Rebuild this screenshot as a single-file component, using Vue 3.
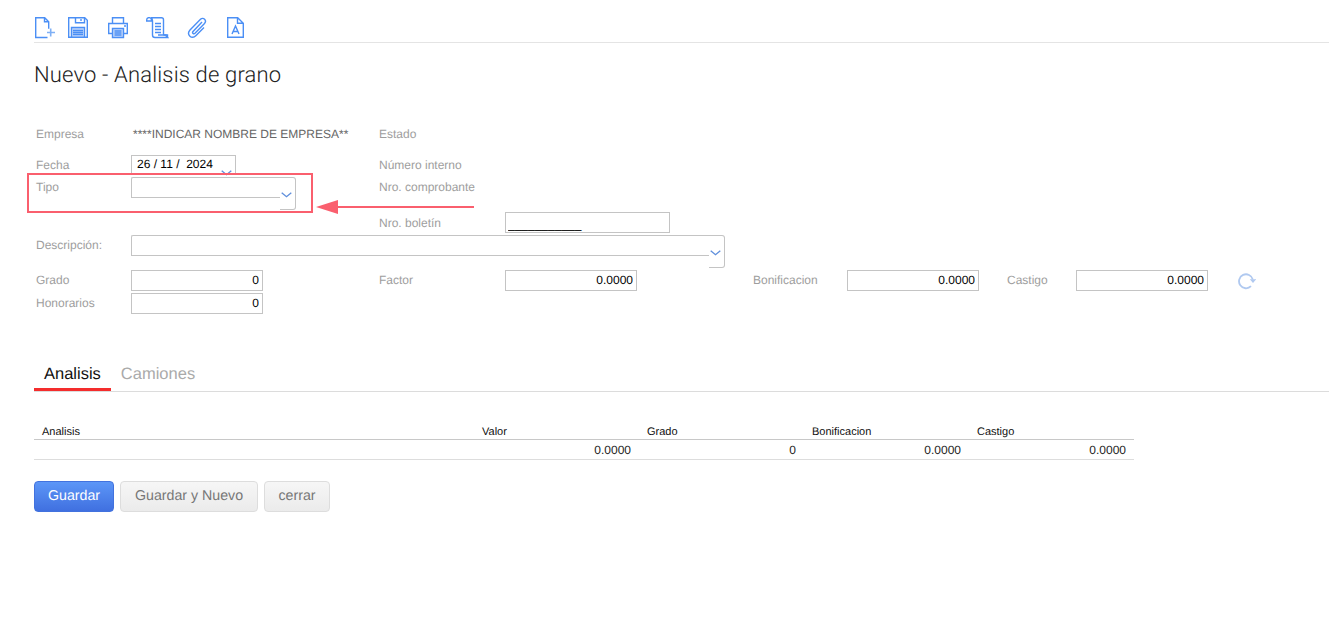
<script setup>
const tableHeaders = ['Analisis', 'Valor', 'Grado', 'Bonificacion', 'Castigo']
const tableValues = ['', '0.0000', '0', '0.0000', '0.0000']
</script>

<template>
  <div class="page">
    <div class="toolbar">
      <svg class="ic" style="margin-left:1px" width="20" height="22" viewBox="0 0 20 22"><path d="M12.500 20.500H.7V.7h9l4 4v7M9.500.7v4h4"/><path class="alt" d="M12 15.500h8M15.700 11.500v8"/></svg>
      <svg class="ic" style="margin-left:13px" width="20" height="22" viewBox="0 0 20 22"><path d="M.7.7h16l2.600 2.600v17H.7z"/><path d="M7.500.7v5h9v-5M13 2v2"/><path class="fill" d="M3.500 10.500h13v9.800h-13z"/><path d="M5 13.500h10M5 15.500h10M5 17.500h10"/></svg>
      <svg class="ic" style="margin-left:20px" width="20" height="22" viewBox="0 0 20 22"><path d="M4.500 6.500V.7h11v5.800"/><path d="M4 16.500H.7V6.500h18.600v10H16"/><path class="fill" d="M4.500 11.500h11v9h-11z"/><path d="M6.500 14h7M6.500 16h7M6.500 18h7M16 9h2"/></svg>
      <svg class="ic" style="margin-left:18px" width="23" height="22" viewBox="0 0 23 22"><path d="M5 .7h10.500a2 2 0 0 1 2 2V18M.7 3a2.300 2.300 0 0 1 4.800 0v1H.7zM5 .7c1 .8 1.500 1.500 1.500 3V18c0 1.500 1 2.500 2.500 2.500h12.500c-1-.7-1.500-1.500-1.500-2.500h-8"/><path d="M9 6.500h6M9 9.500h6M9 12.500h6M9 15.500h6M17.500 18h4v2.500"/></svg>
      <svg class="ic" style="margin-left:18px" width="20" height="22" viewBox="0 0 20 22"><path d="M15 5 6 14.500c-1.200 1.400.6 3 2 1.700L17.500 6.500c2.700-3-1.200-7-4-4.200L3 13c-4 4.500 1.800 10 5.800 5.800L17 10.500"/></svg>
      <svg class="ic" style="margin-left:20px" width="18" height="22" viewBox="0 0 18 22"><path d="M.7.7h10l5.600 5.600v14H.7zM10.500.7v5.600h5.800"/><path d="m5 17 3.500-8 3.500 8M6.200 14.500h4.600"/></svg>
    </div>

    <h1 class="title">Nuevo - Analisis de grano</h1>

    <div class="form">
      <div class="row r1">
        <label class="first">Empresa</label>
        <span class="static">****INDICAR NOMBRE DE EMPRESA**</span>
        <label>Estado</label>
      </div>
      <div class="row r2">
        <label class="first">Fecha</label>
        <div class="date">
          <span class="date-text">26 / 11 /&nbsp; 2024</span>
          <svg class="chev date-chev" width="11" height="6" viewBox="0 0 11 6"><path d="m.7.7 4.800 4 4.800-4"/></svg>
        </div>
        <label>Número interno</label>
      </div>
      <div class="row r3">
        <label class="first">Tipo</label>
        <div class="select tipo">
          <div class="sel-input"></div>
          <div class="sel-btn"><svg class="chev" width="11" height="6" viewBox="0 0 11 6"><path d="m.7.7 4.800 4 4.800-4"/></svg></div>
        </div>
        <label>Nro. comprobante</label>
      </div>
      <div class="row r4">
        <span></span><span></span>
        <label class="tall">Nro. boletín</label>
        <input class="inp boletin" value="___________" />
      </div>
      <div class="row r5">
        <label class="first">Descripción:</label>
        <div class="select desc">
          <div class="sel-input"></div>
          <div class="sel-btn"><svg class="chev" width="11" height="6" viewBox="0 0 11 6"><path d="m.7.7 4.800 4 4.800-4"/></svg></div>
        </div>
      </div>
      <div class="row r6">
        <label class="first">Grado</label>
        <input class="inp num" value="0" />
        <label>Factor</label>
        <input class="inp num" value="0.0000" />
        <label>Bonificacion</label>
        <input class="inp num" value="0.0000" />
        <label>Castigo</label>
        <input class="inp num" value="0.0000" />
        <svg class="refresh" width="18" height="18" viewBox="0 0 18 18"><path d="M13 14.200A7 7 0 1 1 14.800 7.500"/><path class="head" d="M11.800 7.300h6.400L15 11z"/></svg>
      </div>
      <div class="row r7">
        <label class="first">Honorarios</label>
        <input class="inp num" value="0" />
      </div>
    </div>

    <div class="tabs">
      <div class="tab active">Analisis</div>
      <div class="tab">Camiones</div>
    </div>

    <table class="grid">
      <thead>
        <tr><th v-for="h in tableHeaders" :key="h">{{ h }}</th></tr>
      </thead>
      <tbody>
        <tr><td v-for="(v, i) in tableValues" :key="i">{{ v }}</td></tr>
      </tbody>
    </table>

    <div class="buttons">
      <button class="btn primary">Guardar</button>
      <button class="btn">Guardar y Nuevo</button>
      <button class="btn close">cerrar</button>
    </div>

    <div class="mark-box"></div>
    <svg class="mark-arrow" width="160" height="16" viewBox="0 0 160 16"><path d="M20 7h138" stroke="#fa5f6e" stroke-width="2"/><path d="M0 7 22 0v14z" fill="#fa5f6e"/></svg>
  </div>
</template>

<style>
html, body { margin: 0; background: #fff; }
</style>

<style scoped>
.page {
  position: relative;
  width: 1329px;
  height: 617px;
  overflow: hidden;
  padding-left: 34px;
  box-sizing: border-box;
  font-family: "Liberation Sans", Arial, sans-serif;
  background: #fff;
  text-rendering: geometricPrecision;
}
.toolbar {
  display: flex;
  align-items: flex-start;
  height: 43px;
  padding-top: 17px;
  box-sizing: border-box;
  border-bottom: 1px solid #e4e4e4;
}
.ic { fill: none; stroke: #4b8ff5; stroke-width: 1.400; display: block; flex: none; }
.ic .alt { stroke: #7fb0f5; stroke-width: 1.600; }
.ic .fill { fill: #c4d9fb; }
.title {
  margin: 19px 0 0;
  font: 300 22px/28px Roboto, sans-serif;
  color: #222;
  height: 28px;
  letter-spacing: 0.16px;
}
.form { margin-top: 34px; }
.row {
  display: grid;
  grid-template-columns: 97px 248px 126px 248px 94px 160px 69px 162px 1fr;
  align-items: start;
}
.r1 { height: 31px; }
.r2 { height: 22px; }
.r3 { height: 35px; }
.r4 { height: 23px; }
.r5 { height: 35px; }
.r6 { height: 23px; }
.r7 { height: 21px; }
label {
  font-size: 12px;
  line-height: 20px;
  color: #9e9e9e;
  white-space: nowrap;
}
label.first { padding-left: 2px; }
label.tall { line-height: 22px; }
.static {
  font-size: 12px;
  line-height: 20px;
  color: #666;
  padding-left: 2px;
  white-space: nowrap;
}
.date {
  position: relative;
  width: 105px;
  height: 20px;
  box-sizing: border-box;
  border: 1px solid #c4c4c4;
  font-size: 12px;
  line-height: 17px;
  color: #000;
  padding-left: 5px;
}
.date-text { white-space: nowrap; }
.date-chev { position: absolute; right: 3px; top: 14px; }
.chev { fill: none; stroke: #5f8fdc; stroke-width: 1.300; display: block; }
.select { display: flex; align-items: flex-start; }
.select.tipo { width: 165px; }
.select.desc { width: 594px; grid-column: 2 / span 4; }
.sel-input {
  flex: 1;
  height: 21px;
  box-sizing: border-box;
  border: 1px solid #c4c4c4;
  border-right: 0;
  border-radius: 2px 0 0 0;
}
.sel-btn {
  position: relative;
  width: 16px;
  height: 33px;
  box-sizing: border-box;
  border: 1px solid #c4c4c4;
  border-left: 0;
  border-radius: 0 3px 3px 0;
}
.sel-btn .chev { position: absolute; right: 3px; top: 14px; }
.inp {
  display: block;
  width: 132px;
  height: 21px;
  box-sizing: border-box;
  border: 1px solid #c4c4c4;
  border-radius: 0;
  outline: 0;
  padding: 0 3px 1px 2px;
  font: 12px "Liberation Sans", Arial, sans-serif;
  text-rendering: geometricPrecision;
  color: #000;
  background: #fff;
}
.num { text-align: right; }
.boletin { width: 165px; padding: 2px 2px 0; text-rendering: auto; }
.refresh { margin: 2px 0 0 0; fill: none; stroke: #b0c9f0; stroke-width: 1.800; }
.refresh .head { fill: #b0c9f0; stroke: none; }
.tabs {
  display: flex;
  margin-top: 43px;
  height: 34px;
  border-bottom: 1px solid #dcdcdc;
}
.tab {
  height: 31px;
  padding: 0 10px;
  font-size: 16.5px;
  line-height: 34px;
  color: #aaa;
}
.tab.active {
  color: #111;
  border-bottom: 3px solid #f42d2d;
}
.grid {
  margin-top: 31px;
  width: 1100px;
  border-collapse: collapse;
  table-layout: fixed;
}
.grid th:first-child, .grid td:first-child { width: 440px; }
.grid th {
  font-size: 11px;
  font-weight: 400;
  color: #111;
  text-align: left;
  padding: 3px 8px 0;
  height: 16px;
  line-height: 13px;
  border-bottom: 1px solid #c8c8c8;
  box-sizing: border-box;
}
.grid td {
  font-size: 12px;
  color: #222;
  text-align: right;
  padding: 2px 8px 0;
  height: 20px;
  line-height: 17px;
  border-bottom: 1px solid #ddd;
  box-sizing: border-box;
}
.buttons { display: flex; gap: 6px; margin-top: 21px; }
.btn {
  height: 31px;
  box-sizing: border-box;
  border: 1px solid #ddd;
  border-radius: 4px;
  background: linear-gradient(#f6f6f6, #ebebeb);
  color: #777;
  font: 14.2px "Liberation Sans", Arial, sans-serif;
  text-rendering: geometricPrecision;
  padding: 0 14px 2px;
  margin: 0;
}
.btn.close { width: 66px; padding: 0 0 2px; }
.btn.primary {
  width: 80px;
  padding: 0 0 2px;
  border-color: #4272de;
  background: linear-gradient(#5c96f7, #4070e0);
  color: #fff;
}
.mark-box {
  position: absolute;
  left: 27px;
  top: 173px;
  width: 286px;
  height: 40px;
  box-sizing: border-box;
  border: 2px solid #fa5f6e;
}
.mark-arrow { position: absolute; left: 316px; top: 200px; }
</style>
